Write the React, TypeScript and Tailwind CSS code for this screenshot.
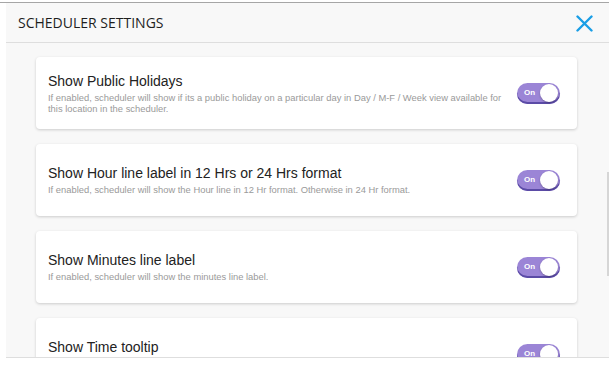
import React from "react";

type Item = { title: string; desc: string };

const items: Item[] = [
  {
    title: "Show Public Holidays",
    desc: "If enabled, scheduler will show if its a public holiday on a particular day in Day / M-F / Week view available for this location in the scheduler.",
  },
  {
    title: "Show Hour line label in 12 Hrs or 24 Hrs format",
    desc: "If enabled, scheduler will show the Hour line in 12 Hr format. Otherwise in 24 Hr format.",
  },
  {
    title: "Show Minutes line label",
    desc: "If enabled, scheduler will show the minutes line label.",
  },
  {
    title: "Show Time tooltip",
    desc: "If enabled, scheduler will show the time tooltip.",
  },
];

function Toggle() {
  return (
    <div className="relative w-[43px] h-[21px] shrink-0 rounded-full bg-[#9b85d6] shadow-[inset_0_-2px_0_#5b4ba6] flex items-center">
      <span className="ml-[7px] text-[8px] font-bold text-white leading-none">On</span>
      <span className="absolute right-[2px] top-[1px] w-[18px] h-[18px] rounded-full bg-white shadow-[0_1px_2px_rgba(0,0,0,0.25)]" />
    </div>
  );
}

function Card({ item }: { item: Item }) {
  return (
    <div className="h-[72px] shrink-0 bg-white rounded-[4px] shadow-[0_1px_3px_rgba(0,0,0,0.18)] flex items-center pl-[12px] pr-[17px]">
      <div className="flex-1 min-w-0">
        <div className="text-[14px] leading-[17px] text-[#222]">{item.title}</div>
        <div className="mt-[2px] text-[9.4px] leading-[11px] text-[#9a9a9a] w-[462px]">{item.desc}</div>
      </div>
      <Toggle />
    </div>
  );
}

export default function App() {
  return (
    <div
      className="w-[616px] h-[372px] bg-white relative overflow-hidden"
      style={{ fontFamily: "'Liberation Sans', Arial, sans-serif" }}
    >
      <div className="h-[2px]" />
      <div className="w-[609px] h-px bg-[#a6a6a6]" />
      <div className="ml-[6px] w-[603px] bg-[#f8f8f8]">
        <div className="h-[40px] border-b border-[#dedede] flex items-center justify-between pl-[12px] pr-[16px]">
          <span
            className="text-[14px] font-medium text-[#1e1e1e]"
            style={{ fontFamily: "'Open Sans', sans-serif" }}
          >
            SCHEDULER SETTINGS
          </span>
          <svg width="17" height="17" viewBox="0 0 17 17" className="mt-[2px]">
            <path d="M1.5 1.5 L15.5 15.5 M15.5 1.5 L1.5 15.5" stroke="#1a9ee6" strokeWidth="2.4" strokeLinecap="round" />
          </svg>
        </div>
        <div className="relative h-[315px] overflow-hidden border-b border-[#dedede]">
          <div className="pt-[14px] pl-[30px] w-[571px] flex flex-col gap-[15px]">
            {items.map((it) => (
              <Card key={it.title} item={it} />
            ))}
          </div>
          <div className="absolute right-0 top-[129px] w-[2px] h-[104px] bg-[#d6d6d6]" />
        </div>
      </div>
    </div>
  );
}
